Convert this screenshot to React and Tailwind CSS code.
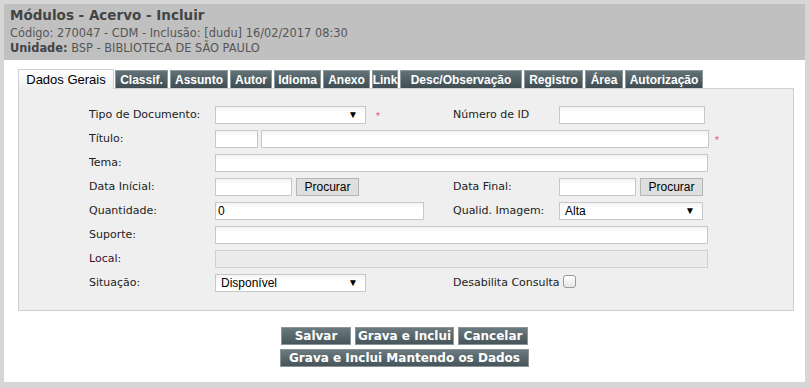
import React from "react";

const V = { fontFamily: '"DejaVu Sans", Verdana, sans-serif' };
const A = { fontFamily: '"Liberation Sans", Arial, sans-serif' };

const inputCls =
  "h-[18px] border border-[#c8c8c8] bg-[linear-gradient(#f4f4f4,#ffffff_40%)] shrink-0";

function Label({ children, w = "w-[126px]", cls = "" }) {
  return (
    <div className={`${w} shrink-0 text-[11px] text-[#222] ${cls}`} style={V}>
      {children}
    </div>
  );
}

function Select({ w, value }) {
  return (
    <div
      className={`${inputCls} ${w} flex items-center justify-between pl-[5px] pr-[7px] text-[12px] text-black`}
      style={A}
    >
      <span>{value}</span>
      <span className="text-[10px] leading-none">▼</span>
    </div>
  );
}

function Btn({ children }) {
  return (
    <div
      className="h-[18px] px-[5px] border border-[#b5b5b5] bg-[#dfdfdf] flex items-center justify-center text-[12px] text-black"
      style={A}
    >
      {children}
    </div>
  );
}

function Star() {
  return <span className="text-[#e0507a] text-[10px] leading-none mt-[4px]" style={A}>*</span>;
}

function DarkBtn({ w, children }) {
  return (
    <div
      className={`${w} h-[18px] border border-[#8e9497] bg-[linear-gradient(#6a7a7f,#46555a)] flex items-center justify-center text-white font-bold text-[12px] whitespace-nowrap`}
      style={V}
    >
      {children}
    </div>
  );
}

const tabs = [
  ["Classif.", "w-[53px]"],
  ["Assunto", "w-[58px]"],
  ["Autor", "w-[42px]"],
  ["Idioma", "w-[47px]"],
  ["Anexo", "w-[47px]"],
  ["Link", "w-[26px]"],
  ["Desc/Observação", "w-[122px]"],
  ["Registro", "w-[59px]"],
  ["Área", "w-[38px]"],
  ["Autorização", "w-[78px]"],
];

export default function App() {
  return (
    <div className="w-[810px] h-[388px] bg-[#d6d6d6] overflow-hidden">
      <div className="ml-[4px] mt-[4px] w-[801px] h-[378px] bg-white flex flex-col">
        <div className="h-[56px] shrink-0 bg-[#c0c0c0] pl-[6px] pt-[3px] text-[#555]" style={V}>
          <div className="text-[13.5px] font-bold leading-[16px] text-[#444]">
            Módulos - Acervo - Incluir
          </div>
          <div className="text-[11.4px] leading-[16px] mt-[2px]">
            Código: 270047 - CDM - Inclusão: [dudu] 16/02/2017 08:30
          </div>
          <div className="text-[11.4px] leading-[14px]">
            <span className="font-bold text-[#444]">Unidade:</span> BSP - BIBLIOTECA DE SÃO PAULO
          </div>
        </div>

        <div className="pl-[14px] pt-[8px]">
          <div className="flex items-end h-[20px]">
            <div
              className="w-[96px] h-[20px] border border-b-0 border-[#cfcfcf] bg-[linear-gradient(#ffffff,#efefef)] flex items-center justify-center text-[13px] text-black relative z-10 -mb-[1px]"
              style={A}
            >
              Dados Gerais
            </div>
            <div className="flex gap-[2px] ml-[1px]">
              {tabs.map(([t, w]) => (
                <div
                  key={t}
                  className={`${w} h-[18px] bg-[linear-gradient(#627277,#3f4d52)] border border-[#8d989b] border-b-0 flex items-center justify-center text-white font-bold text-[12px] whitespace-nowrap`}
                  style={A}
                >
                  {t}
                </div>
              ))}
            </div>
          </div>

          <div className="w-[776px] border border-[#cfcfcf] bg-[#efefef] pl-[70px] pt-[17px] pb-[18px] flex flex-col gap-[6px]">
            <div className="flex items-center">
              <Label>Tipo de Documento:</Label>
              <div className="w-[238px] flex items-center gap-[10px]">
                <Select w="w-[151px]" value="" />
                <Star />
              </div>
              <Label w="w-[106px]">Número de ID</Label>
              <div className={`${inputCls} w-[146px]`} />
            </div>

            <div className="flex items-center">
              <Label>Título:</Label>
              <div className="flex items-center gap-[3px]">
                <div className={`${inputCls} w-[43px]`} />
                <div className={`${inputCls} w-[448px]`} />
                <span className="ml-[3px] flex"><Star /></span>
              </div>
            </div>

            <div className="flex items-center">
              <Label>Tema:</Label>
              <div className={`${inputCls} w-[493px]`} />
            </div>

            <div className="flex items-center">
              <Label>Data Inícial:</Label>
              <div className="w-[238px] flex items-center gap-[4px]">
                <div className={`${inputCls} w-[77px]`} />
                <div className="w-[63px]"><Btn>Procurar</Btn></div>
              </div>
              <Label w="w-[106px]">Data Final:</Label>
              <div className="flex items-center gap-[4px]">
                <div className={`${inputCls} w-[77px]`} />
                <div className="w-[63px]"><Btn>Procurar</Btn></div>
              </div>
            </div>

            <div className="flex items-center">
              <Label>Quantidade:</Label>
              <div className="w-[238px]">
                <div className={`${inputCls} w-[209px] flex items-center pl-[2px] text-[12px] text-black`} style={A}>0</div>
              </div>
              <Label w="w-[106px]">Qualid. Imagem:</Label>
              <Select w="w-[144px]" value="Alta" />
            </div>

            <div className="flex items-center">
              <Label>Suporte:</Label>
              <div className={`${inputCls} w-[493px]`} />
            </div>

            <div className="flex items-center">
              <Label cls="!text-[#3a1030]">Local:</Label>
              <div className="h-[18px] w-[493px] border border-[#d0d0d0] bg-[#ececec]" />
            </div>

            <div className="flex items-center">
              <Label>Situação:</Label>
              <div className="w-[238px]">
                <Select w="w-[151px]" value="Disponível" />
              </div>
              <div className="flex items-center gap-[3px]">
                <span className="text-[11px] text-[#222]" style={V}>Desabilita Consulta</span>
                <div className="w-[13px] h-[13px] rounded-[3px] border border-[#9a9a9a] bg-[linear-gradient(#ffffff,#e6e6e6)] -mt-[3px]" />
              </div>
            </div>
          </div>
        </div>

        <div className="flex flex-col items-center gap-[4px] mt-[16px]">
          <div className="flex gap-[4px]">
            <DarkBtn w="w-[70px]">Salvar</DarkBtn>
            <DarkBtn w="w-[99px]">Grava e Inclui</DarkBtn>
            <DarkBtn w="w-[70px]">Cancelar</DarkBtn>
          </div>
          <DarkBtn w="w-[249px]">Grava e Inclui Mantendo os Dados</DarkBtn>
        </div>
      </div>
    </div>
  );
}
